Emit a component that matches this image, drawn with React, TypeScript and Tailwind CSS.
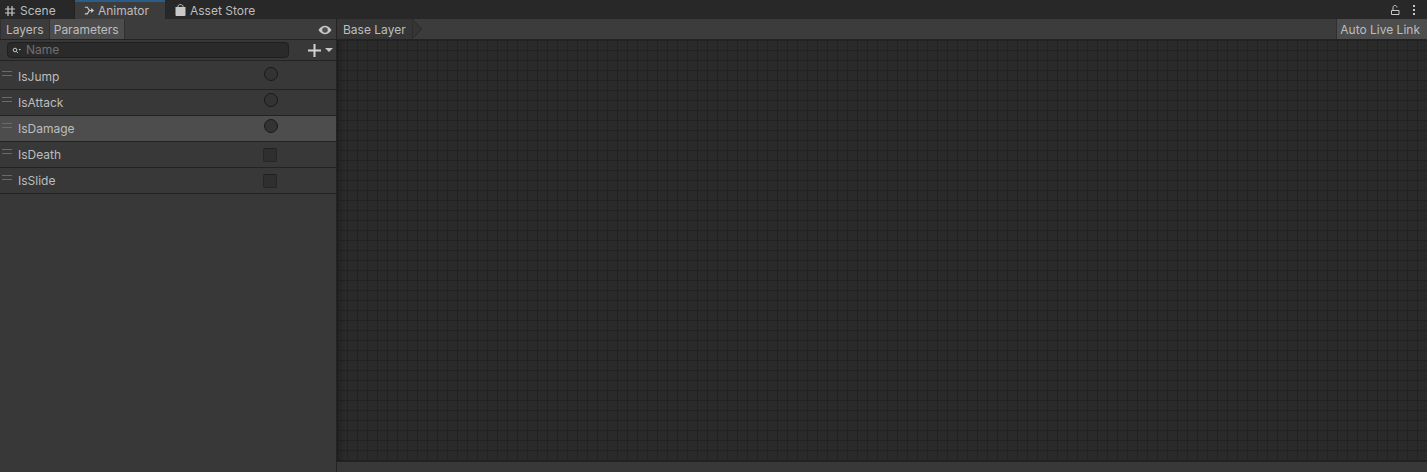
import React from 'react';

const params = [
  { name: 'IsJump', kind: 'trigger' },
  { name: 'IsAttack', kind: 'trigger' },
  { name: 'IsDamage', kind: 'trigger', selected: true },
  { name: 'IsDeath', kind: 'bool' },
  { name: 'IsSlide', kind: 'bool' },
];

function ParamRow({ name, kind, selected, first }: { name: string; kind: string; selected?: boolean; first?: boolean }) {
  return (
    <div className={`flex shrink-0 border-b border-[#232323] ${first ? 'h-[29px]' : 'h-[26px]'} ${selected ? 'bg-[#4d4d4d]' : 'bg-[#383838]'}`}>
      <div className={`ml-[2px] h-[5px] w-[10px] border-y border-[#6a6a6a] ${first ? 'mt-[10px]' : 'mt-[7px]'}`} />
      <span className={`ml-[6px] text-[12px] leading-[14px] text-[#bdbdbd] ${first ? 'mt-[9px]' : 'mt-[6px]'}`}>{name}</span>
      <div className="flex-1" />
      {kind === 'trigger' ? (
        <div className={`mr-[58px] size-[14px] rounded-full border border-[#1a1a1a] bg-[#333333] ${first ? 'mt-[6px]' : 'mt-[3px]'}`} />
      ) : (
        <div className="mr-[59px] mt-[6px] size-[14px] rounded-[2px] border border-[#262626] border-t-[#1f1f1f] bg-[#2f2f2f]" />
      )}
    </div>
  );
}

export default function App() {
  return (
    <div className="flex h-[472px] w-[1427px] flex-col overflow-hidden bg-[#383838] font-['Inter','Noto_Sans',sans-serif] text-[12px] text-[#bdbdbd]">
      {/* tab strip */}
      <div className="flex h-[19px] shrink-0 bg-[#282828]">
        <div className="flex w-[75px] items-center border-r border-[#232323] pt-[2px]">
          <svg viewBox="0 0 10 10" className="ml-[5px] size-[10px]" fill="none" stroke="#c8c8c8" strokeWidth="1.2">
            <path d="M3 0v10M7 0v10M0 3h10M0 7h10" />
          </svg>
          <span className="ml-[5px] leading-none">Scene</span>
        </div>
        <div className="flex w-[90px] items-center border-t-2 border-[#2c5d87] bg-[#3c3c3c]">
          <svg viewBox="0 0 12 10" className="ml-[9px] h-[9px] w-[10px]" fill="none" stroke="#d0d0d0" strokeWidth="1.3">
            <path d="M1 1l3 0 2.500 4H11M8.500 2.800L11 5 8.500 7.200M1 9l3 0L6.500 5" />
          </svg>
          <span className="ml-[4px] leading-none">Animator</span>
        </div>
        <div className="flex items-center pt-[2px]">
          <svg viewBox="0 0 11 12" className="ml-[10px] mb-[2px] h-[12px] w-[11px]">
            <path d="M3 3.500V2.400C3 1.200 4.100.6 5.500.6S8 1.200 8 2.400v1.100" fill="none" stroke="#c8c8c8" strokeWidth="1" />
            <path d="M.5 3h10v8c0 .5-.4.9-.9.9H1.400c-.5 0-.9-.4-.9-.9z" fill="#c8c8c8" />
          </svg>
          <span className="ml-[4px] leading-none">Asset Store</span>
        </div>
        <div className="flex-1" />
        <div className="flex items-center">
          <svg viewBox="0 0 9 10" className="h-[10px] w-[9px]" fill="none" stroke="#c8c8c8" strokeWidth="1">
            <path d="M.5 5.500h7.500v4H.5zM2 5.500V2.500C2 1.300 2.800.5 4 .5s2 .8 2 2" />
          </svg>
          <div className="ml-[13px] mr-[12px] flex flex-col gap-[2px]">
            <div className="size-[2px] bg-[#c8c8c8]" />
            <div className="size-[2px] bg-[#c8c8c8]" />
            <div className="size-[2px] bg-[#c8c8c8]" />
          </div>
        </div>
      </div>

      <div className="flex min-h-0 flex-1">
        {/* left panel */}
        <div className="flex w-[337px] shrink-0 flex-col border-r border-[#232323]">
          <div className="flex h-[21px] shrink-0 items-center border-b border-[#232323] bg-[#3c3c3c]">
            <div className="flex h-full items-center border-x border-[#303030] bg-[#3c3c3c] px-[5px] pt-[2px]">Layers</div>
            <div className="flex h-full items-center border-r border-[#303030] bg-[#4d4d4d] pl-[4px] pr-[5px] pt-[2px]">Parameters</div>
            <div className="flex-1" />
            <svg viewBox="0 0 14 10" className="mr-[4px] mt-[1px] h-[10px] w-[14px]">
              <path d="M.5 5C2.500 1.800 4.700.8 7 .8s4.500 1 6.500 4.200C11.500 8.200 9.300 9.200 7 9.200S2.500 8.200.5 5z" fill="#c8c8c8" />
              <circle cx="7" cy="5" r="2.800" fill="#505050" />
            </svg>
          </div>
          <div className="flex h-[21px] shrink-0 items-center border-b border-[#232323]">
            <div className="ml-[7px] flex h-[16px] w-[282px] items-center rounded-[4px] border border-[#1f1f1f] bg-[#2a2a2a]">
              <svg viewBox="0 0 9 7" className="ml-[4px] h-[7px] w-[9px]" fill="none" stroke="#c4c4c4">
                <circle cx="3" cy="3" r="1.800" />
                <path d="M4.400 4.400L6 6" />
                <path d="M6.500 2h2.500l-1.250 1.500z" fill="#c4c4c4" stroke="none" />
              </svg>
              <span className="ml-[5px] leading-none text-[#707070]">Name</span>
            </div>
            <svg viewBox="0 0 13 13" className="ml-[19px] size-[13px]" stroke="#d2d2d2" strokeWidth="2">
              <path d="M6.500 0v13M0 6.500h13" />
            </svg>
            <div className="ml-[4px] h-0 w-0 border-x-[4px] border-t-[4px] border-x-transparent border-t-[#c8c8c8]" />
          </div>
          {params.map((p, i) => (
            <ParamRow key={p.name} name={p.name} kind={p.kind} selected={p.selected} first={i === 0} />
          ))}
        </div>

        {/* graph */}
        <div className="flex min-w-0 flex-1 flex-col">
          <div className="flex h-[21px] shrink-0 items-center border-b border-[#232323] bg-[#3c3c3c]">
            <div className="flex h-full items-center">
              <div className="flex h-full items-center bg-[#353535] pl-[6px] pr-[6px] pt-[2px]">Base Layer</div>
              <svg viewBox="0 0 10 21" className="h-[20px] w-[10px]">
                <path d="M0 0l10 10.500L0 21z" fill="#353535" stroke="#2a2a2a" />
              </svg>
            </div>
            <div className="flex-1" />
            <div className="flex h-full items-center border-l border-[#303030] bg-[#4d4d4d] pl-[3px] pr-[7px] pt-[2px]">Auto Live Link</div>
          </div>
          <div className="min-h-0 flex-1 bg-[#2a2a2a] bg-[linear-gradient(90deg,rgba(0,0,0,0.2),transparent_8px),linear-gradient(#222222_1px,transparent_1px),linear-gradient(90deg,#222222_1px,transparent_1px)] bg-[size:100%_100%,10px_10px,10px_10px]" />
          <div className="h-[11px] shrink-0 border-t border-[#232323] bg-[#383838]" />
        </div>
      </div>
    </div>
  );
}
